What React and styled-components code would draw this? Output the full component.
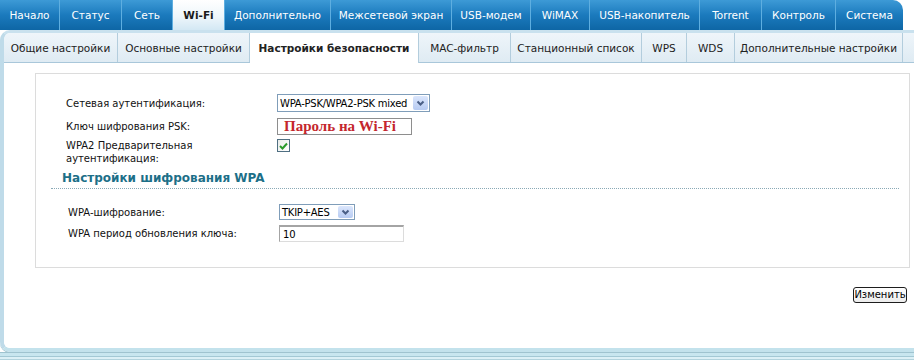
import React from "react";
import styled, { createGlobalStyle } from "styled-components";

const GlobalStyle = createGlobalStyle`
  html, body {
    margin: 0;
    padding: 0;
    background: #fff;
  }
  body {
    font-family: "DejaVu Sans", Tahoma, sans-serif;
  }
`;

const Page = styled.div`
  width: 914px;
  height: 362px;
  overflow: hidden;
  background: #fff;
`;

const TopNav = styled.nav`
  display: flex;
  width: 903px;
  height: 30px;
  background: linear-gradient(#3d9ad6, #1b7abd 50%, #0e66a5);
  border-top-right-radius: 10px;
  overflow: hidden;
`;

const TopTab = styled.a`
  flex: none;
  width: ${(p) => p.$w}px;
  display: flex;
  align-items: center;
  justify-content: center;
  box-sizing: border-box;
  font-size: 10.5px;
  color: ${(p) => (p.$active ? "#1a1a1a" : "#fff")};
  font-weight: ${(p) => (p.$active ? "bold" : "normal")};
  background: ${(p) =>
    p.$active ? "linear-gradient(#ffffff, #eef6fb 55%, #d3e8f4)" : "transparent"};
  border-right: 1px solid #5eaee0;
  white-space: nowrap;
  cursor: pointer;
  &:last-child {
    border-right: none;
  }
`;

const Frame = styled.div`
  height: 315px;
  border-top: 3px solid #c9e1ee;
  border-left: 4px solid #bfdbe9;
  border-bottom: 4px solid #c3e2ec;
  border-radius: 10px 0 0 10px;
  overflow: hidden;
  box-shadow: 0 1px 0 #9fc3cf;
  display: flex;
  flex-direction: column;
`;

const FrameFoot = styled.div`
  height: 10px;
  background: linear-gradient(
    #9fc3cf 0 1px,
    #c8e6ef 1px 4px,
    #a3c8d4 4px 5px,
    #dcf0f6 5px 7px,
    #b2d3dd 7px 8px,
    #ffffff 8px
  );
`;

const SubNav = styled.div`
  display: flex;
  height: 29px;
  flex: none;
  background: linear-gradient(#eef5fa, #dfebf3);
  border-bottom: 1px solid #a9c7da;
`;

const SubTab = styled.a`
  flex: none;
  width: ${(p) => p.$w}px;
  display: flex;
  align-items: center;
  justify-content: center;
  box-sizing: border-box;
  font-size: 10.5px;
  color: #222;
  font-weight: ${(p) => (p.$active ? "bold" : "normal")};
  background: ${(p) => (p.$active ? "#fff" : "transparent")};
  border-right: 1px solid #b3cddd;
  margin-bottom: ${(p) => (p.$active ? "-1px" : "0")};
  white-space: nowrap;
  cursor: pointer;
`;

const Content = styled.div`
  flex: 1;
  background: #fff;
  display: flex;
  flex-direction: column;
`;

const Panel = styled.div`
  margin: 10px 0 0 31px;
  width: 875px;
  box-sizing: border-box;
  border: 1px solid #dcdcdc;
  padding: 20px 0 25px 0;
`;

const Row = styled.div`
  display: flex;
  align-items: ${(p) => (p.$top ? "flex-start" : "center")};
  padding-left: ${(p) => 30 + (p.$shift || 0)}px;
  margin-top: ${(p) => p.$gap || 0}px;
  min-height: ${(p) => p.$h || 0}px;
`;

const Label = styled.div`
  width: 211px;
  flex: none;
  font-size: 10px;
  line-height: 13px;
  color: #111;
`;

const Select = styled.div`
  display: flex;
  align-items: stretch;
  width: ${(p) => p.$w}px;
  height: ${(p) => p.$h}px;
  box-sizing: border-box;
  border: 1px solid #7f9db9;
  background: #fff;
`;

const SelectText = styled.span`
  flex: 1;
  display: flex;
  align-items: center;
  padding-left: 2px;
  font-size: 10px;
  letter-spacing: -0.25px;
  color: #000;
  white-space: nowrap;
  overflow: hidden;
`;

const SelectArrow = styled.span`
  flex: none;
  width: 15px;
  margin: 1px;
  border-radius: 2px;
  background: linear-gradient(#dbe6fc, #b7cbf2);
  display: flex;
  align-items: center;
  justify-content: center;
`;

const TextBox = styled.div`
  width: ${(p) => p.$w}px;
  height: ${(p) => p.$h}px;
  box-sizing: border-box;
  display: flex;
  align-items: center;
  padding-left: ${(p) => (p.$sunken ? 3 : 6)}px;
  border: 1px solid ${(p) => (p.$sunken ? "#dcdcdc" : "#8e8e8e")};
  border-top: ${(p) => (p.$sunken ? "2px solid #a4a4a4" : "1px solid #8e8e8e")};
  border-left-color: ${(p) => (p.$sunken ? "#a4a4a4" : "#8e8e8e")};
  background: #fff;
`;

const PskText = styled.span`
  font-family: "Liberation Serif", "Times New Roman", serif;
  font-size: 15px;
  font-weight: bold;
  color: #c4262d;
  white-space: nowrap;
`;

const PlainText = styled.span`
  font-size: 10px;
  color: #000;
`;

const Check = styled.div`
  width: 13px;
  height: 13px;
  box-sizing: border-box;
  border: 1px solid #4f6f82;
  background: linear-gradient(135deg, #e9ece9, #ffffff);
  display: flex;
  align-items: center;
  justify-content: center;
`;

const Heading = styled.div`
  margin: 5px 10px 0 15px;
  padding: 0 0 2px 11px;
  font-size: 12px;
  line-height: 16px;
  font-weight: bold;
  color: #1d6f88;
  border-bottom: 1px dotted #8aa9b6;
`;

const Actions = styled.div`
  display: flex;
  justify-content: flex-end;
  padding-right: 7px;
  margin-top: 19px;
`;

const Button = styled.button`
  width: 54px;
  height: 16px;
  padding: 0;
  box-sizing: border-box;
  border: 1px solid #1e1e1e;
  border-radius: 3px;
  background: linear-gradient(#ffffff, #ececec);
  font-family: "DejaVu Sans", Tahoma, sans-serif;
  font-size: 10px;
  line-height: 14px;
  color: #000;
  cursor: pointer;
`;

const Chevron = () => (
  <svg width="9" height="7" viewBox="0 0 9 7">
    <path d="M1.5 1.5 L4.5 4.5 L7.5 1.5" fill="none" stroke="#4a5f86" strokeWidth="2" />
  </svg>
);

const topTabs = [
  ["Начало", 60],
  ["Статус", 62],
  ["Сеть", 51],
  ["Wi-Fi", 52],
  ["Дополнительно", 106],
  ["Межсетевой экран", 121],
  ["USB-модем", 79],
  ["WiMAX", 59],
  ["USB-накопитель", 110],
  ["Torrent", 62],
  ["Контроль", 74],
  ["Система", 67],
];

const subTabs = [
  ["Общие настройки", 114],
  ["Основные настройки", 132],
  ["Настройки безопасности", 169],
  ["MAC-фильтр", 92],
  ["Станционный список", 131],
  ["WPS", 45],
  ["WDS", 48],
  ["Дополнительные настройки", 168],
  ["", 40],
];

export default function App() {
  return (
    <Page>
      <GlobalStyle />
      <TopNav>
        {topTabs.map(([name, w]) => (
          <TopTab key={name} $w={w} $active={name === "Wi-Fi"}>
            {name}
          </TopTab>
        ))}
      </TopNav>
      <Frame>
        <SubNav>
          {subTabs.map(([name, w], i) => (
            <SubTab key={i} $w={w} $active={name === "Настройки безопасности"}>
              {name}
            </SubTab>
          ))}
        </SubNav>
        <Content>
          <Panel>
            <Row $h={18}>
              <Label>Сетевая аутентификация:</Label>
              <Select $w={153} $h={18}>
                <SelectText>WPA-PSK/WPA2-PSK mixed</SelectText>
                <SelectArrow>
                  <Chevron />
                </SelectArrow>
              </Select>
            </Row>
            <Row $gap={6} $h={17}>
              <Label>Ключ шифрования PSK:</Label>
              <TextBox $w={135} $h={17}>
                <PskText>Пароль на Wi-Fi</PskText>
              </TextBox>
            </Row>
            <Row $gap={4} $h={26} $top>
              <Label>
                WPA2 Предварительная
                <br />
                аутентификация:
              </Label>
              <Check>
                <svg width="9" height="8" viewBox="0 0 9 8">
                  <path d="M1 4 L3.5 6.5 L8 1.5" fill="none" stroke="#2a9a2a" strokeWidth="2" />
                </svg>
              </Check>
            </Row>
            <Heading>Настройки шифрования WPA</Heading>
            <Row $gap={15} $h={16} $shift={2}>
              <Label>WPA-шифрование:</Label>
              <Select $w={76} $h={16}>
                <SelectText>TKIP+AES</SelectText>
                <SelectArrow>
                  <Chevron />
                </SelectArrow>
              </Select>
            </Row>
            <Row $gap={5} $h={17} $shift={2}>
              <Label>WPA период обновления ключа:</Label>
              <TextBox $w={125} $h={17} $sunken>
                <PlainText>10</PlainText>
              </TextBox>
            </Row>
          </Panel>
          <Actions>
            <Button>Изменить</Button>
          </Actions>
        </Content>
      </Frame>
      <FrameFoot />
    </Page>
  );
}
